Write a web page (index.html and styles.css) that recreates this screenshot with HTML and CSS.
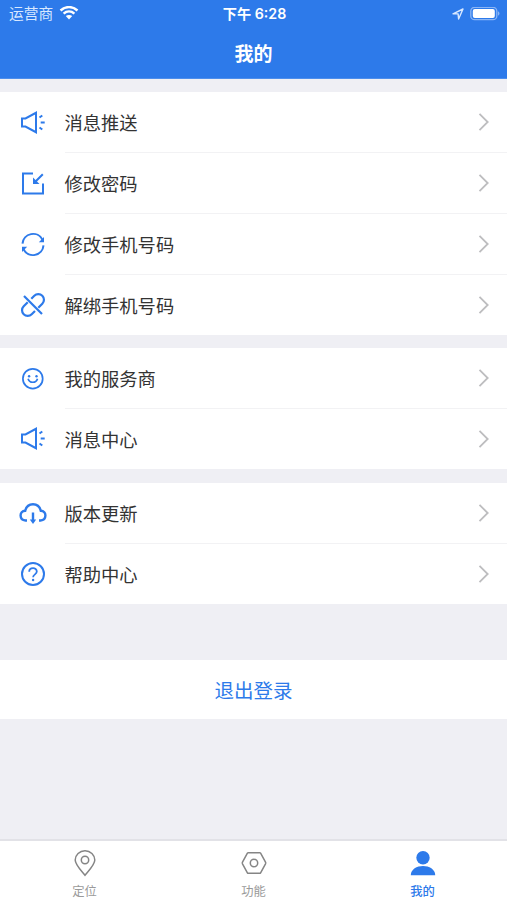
FILE: index.html
```html
<!DOCTYPE html>
<html lang="zh-CN">
<head>
  <meta charset="UTF-8">
  <meta name="viewport" content="width=device-width, initial-scale=1.0">
  <title>我的</title>
  <link rel="stylesheet" href="styles.css">
</head>
<body>

<svg class="sprite" width="0" height="0">
  <symbol id="horn" viewBox="0 0 28 28">
    <path d="M3 9.500H6.500l10.500-5.700v19.400L6.500 17.500H3z"/>
    <path d="M20.500 8.500l2.800-2M21.700 13.500h4M20.500 18.500l2.800 2"/>
  </symbol>
  <symbol id="arrow" viewBox="0 0 12 20">
    <path d="M1.500 1.800L9.700 10l-8.200 8.200"/>
  </symbol>
</svg>

<header class="header">
  <div class="status">
    <div class="carrier">
      <span>运营商</span>
      <svg class="wifi" width="20" height="16" viewBox="0 0 20 16">
        <path d="M1.500 4.500c5-4.600 12-4.600 17 0M4.600 7.700c3.200-2.900 7.600-2.900 10.800 0"/>
        <path class="dot" d="M6.800 10.100c1.900-1.600 4.500-1.600 6.400 0L10 13.400z"/>
      </svg>
    </div>
    <div class="time">下午 6:28</div>
    <div class="power">
      <svg class="locate" width="12" height="12" viewBox="0 0 12 12"><path d="M1 5.800L11 1 6.600 11l-.5-5.100z"/></svg>
      <svg width="30" height="14" viewBox="0 0 30 14">
        <rect class="shell" x=".8" y=".3" width="26" height="12.400" rx="3.800"/>
        <rect x="2.800" y="2.100" width="22" height="8.800" rx="2"/>
        <path class="cap" d="M28 4.300c2 .8 2 3.600 0 4.400z"/>
      </svg>
    </div>
  </div>
  <h1>我的</h1>
</header>

<main>
  <ul class="group">
    <li class="row">
      <svg class="icon"><use href="#horn"/></svg>
      <div class="cell"><span>消息推送</span><svg class="arrow"><use href="#arrow"/></svg></div>
    </li>
    <li class="row">
      <svg class="icon" viewBox="0 0 28 28">
        <path d="M14 3.500H4v20h20V13.500M23.800 4.300l-8 8"/>
        <path class="fill" d="M14 7.500v6.500h6.500z"/>
      </svg>
      <div class="cell"><span>修改密码</span><svg class="arrow"><use href="#arrow"/></svg></div>
    </li>
    <li class="row">
      <svg class="icon" viewBox="0 0 28 28">
        <path d="M3.500 12.700A10.600 10.600 0 0 1 23.500 8.700M24.500 14.300A10.600 10.600 0 0 1 4.500 18.300"/>
        <path class="fill" d="M25 6v5.200h-5.200zM3 21v-5.200h5.200z"/>
      </svg>
      <div class="cell"><span>修改手机号码</span><svg class="arrow"><use href="#arrow"/></svg></div>
    </li>
    <li class="row">
      <svg class="icon link" viewBox="0 0 28 28">
        <path d="M5 5l18 18M12.300 7.700l3-3a5.650 5.650 0 0 1 8 8l-4 4M8.700 11.300l-4 4a5.650 5.650 0 0 0 8 8l3.300-3.300"/>
      </svg>
      <div class="cell"><span>解绑手机号码</span><svg class="arrow"><use href="#arrow"/></svg></div>
    </li>
  </ul>

  <ul class="group">
    <li class="row">
      <svg class="icon thin" viewBox="0 0 28 28">
        <circle cx="13.800" cy="13.700" r="9.900"/>
        <path d="M9.100 13.700c1.300 4.700 8.100 4.700 9.400 0"/>
        <circle class="fill" cx="10.100" cy="11.200" r="1.200"/>
        <circle class="fill" cx="17.500" cy="11.200" r="1.200"/>
      </svg>
      <div class="cell"><span>我的服务商</span><svg class="arrow"><use href="#arrow"/></svg></div>
    </li>
    <li class="row">
      <svg class="icon"><use href="#horn"/></svg>
      <div class="cell"><span>消息中心</span><svg class="arrow"><use href="#arrow"/></svg></div>
    </li>
  </ul>

  <ul class="group">
    <li class="row">
      <svg class="icon cloud" viewBox="0 0 28 28">
        <path d="M8 20.500H6.500C0 20 0 11 6.200 10.800 8.300 2 19.700 2 21.800 10.800 28 11 28 20 21.500 20.500H20M14 12.500v8"/>
        <path class="fill" d="M10.800 19.500h6.400L14 24z"/>
      </svg>
      <div class="cell"><span>版本更新</span><svg class="arrow"><use href="#arrow"/></svg></div>
    </li>
    <li class="row">
      <svg class="icon" viewBox="0 0 28 28">
        <circle cx="14" cy="14" r="11"/>
        <path class="mark" d="M10.200 11.800c0-4.800 7.600-4.800 7.600-.2 0 2.900-3.700 2.700-3.700 5.700"/>
        <circle class="fill" cx="14.100" cy="20" r="1.200"/>
      </svg>
      <div class="cell"><span>帮助中心</span><svg class="arrow"><use href="#arrow"/></svg></div>
    </li>
  </ul>

  <button class="logout" type="button">退出登录</button>
</main>

<nav class="tabs">
  <a class="tab">
    <svg viewBox="0 0 28 28">
      <path d="M14 26.300C10 21.300 4.200 15.600 4.200 11a9.800 9.300 0 0 1 19.600 0c0 4.600-5.800 10.300-9.800 15.300z"/>
      <circle cx="14" cy="11" r="3.700"/>
    </svg>
    <span>定位</span>
  </a>
  <a class="tab">
    <svg viewBox="0 0 28 28">
      <path d="M8.300 3.700h11.400q.6 0 .9.500l4.900 9q.4.800 0 1.600l-4.900 9q-.3.500-.9.500H8.300q-.6 0-.9-.5l-4.900-9q-.4-.8 0-1.600l4.900-9q.3-.5.900-.5z"/>
      <circle cx="14" cy="14" r="3.700"/>
    </svg>
    <span>功能</span>
  </a>
  <a class="tab active">
    <svg viewBox="0 0 28 28">
      <circle cx="14" cy="8.700" r="6.700"/>
      <path d="M1.800 26.200c0-12.400 24.400-12.400 24.400 0z"/>
    </svg>
    <span>我的</span>
  </a>
</nav>

</body>
</html>
```
FILE: styles.css
```css
* {
  box-sizing: border-box;
}
body {
  display: flex;
  flex-direction: column;
  height: 900px;
  margin: 0;
  background: #efeff4;
  color: #333;
  font-family: "Liberation Sans", "Noto Sans CJK SC", sans-serif;
}
svg {
  display: block;
  fill: none;
}
.sprite {
  position: absolute;
}
.header {
  height: 79px;
  background: #2d7aea;
  border-bottom: 1px solid #4d8eec;
  color: #fff;
}
.status {
  display: grid;
  grid-template-columns: 1fr auto 1fr;
  align-items: center;
  height: 27px;
  padding: 0 7px 0 9px;
  font-size: 14.7px;
  line-height: 27px;
}
.carrier {
  display: flex;
  align-items: center;
  gap: 6px;
  padding-top: 1px;
  color: #d8e8ff;
  line-height: 26px;
}
.wifi {
  stroke: #fff;
  stroke-width: 2.4;
}
.wifi .dot {
  fill: #fff;
  stroke: none;
}
.time {
  font-family: Inter, "Noto Sans CJK SC", sans-serif;
  font-size: 14.2px;
  font-weight: 600;
}
.power {
  display: flex;
  align-items: center;
  justify-content: flex-end;
  gap: 6px;
}
.power svg {
  fill: #fff;
}
.power .locate {
  fill: none;
  stroke: #d8e8ff;
  stroke-width: 1.4;
  stroke-linejoin: round;
}
.power .shell {
  fill: none;
  stroke: #8ab5f5;
  stroke-width: 1.3;
}
.power .cap {
  fill: #8ab5f5;
}
h1 {
  margin: 0;
  font-size: 19px;
  font-weight: 700;
  line-height: 55px;
  text-align: center;
}
main {
  flex: 1;
}
.group {
  margin: 13px 0 0;
  padding: 0;
  background: #fff;
  list-style: none;
}
.group:nth-child(3) {
  margin-top: 14px;
}
.row {
  display: flex;
  align-items: center;
  height: 61px;
  padding-left: 18.5px;
}
.row:last-child {
  height: 60px;
}
.icon {
  width: 28px;
  height: 28px;
  margin-right: 18px;
  stroke: #2d7aea;
  stroke-width: 2;
}
.icon.thin {
  stroke-width: 1.7;
}
.icon.link {
  stroke-width: 2.2;
}
.icon.cloud {
  stroke-width: 2.4;
}
.icon .mark {
  stroke-width: 1.8;
}
.icon .fill {
  fill: #2d7aea;
  stroke: none;
}
.cell {
  display: flex;
  flex: 1;
  align-items: center;
  justify-content: space-between;
  height: 100%;
  padding-right: 17px;
  border-bottom: 1px solid #f2f2f4;
  font-size: 18.3px;
}
.row:last-child .cell {
  border-bottom: none;
}
.arrow {
  width: 12px;
  height: 20px;
  stroke: #bdbdbf;
  stroke-width: 1.8;
}
.logout {
  display: block;
  width: 100%;
  height: 59px;
  margin-top: 56px;
  padding: 0;
  border: none;
  background: #fff;
  color: #2d7aea;
  font-family: inherit;
  font-size: 19.5px;
}
.tabs {
  display: flex;
  height: 61px;
  border-top: 2px solid #e2e2e7;
  background: #fff;
}
.tab {
  display: flex;
  flex: 1;
  flex-direction: column;
  align-items: center;
  padding-top: 8px;
  color: #9a9a9a;
  font-size: 12.3px;
  line-height: 16px;
}
.tab svg {
  flex: none;
  width: 28px;
  height: 28px;
  margin-bottom: 7px;
  stroke: #858585;
  stroke-width: 1.5;
}
.tab.active {
  color: #2d7aea;
  font-weight: 500;
}
.tab.active svg {
  fill: #2d7aea;
  stroke: none;
}
```
